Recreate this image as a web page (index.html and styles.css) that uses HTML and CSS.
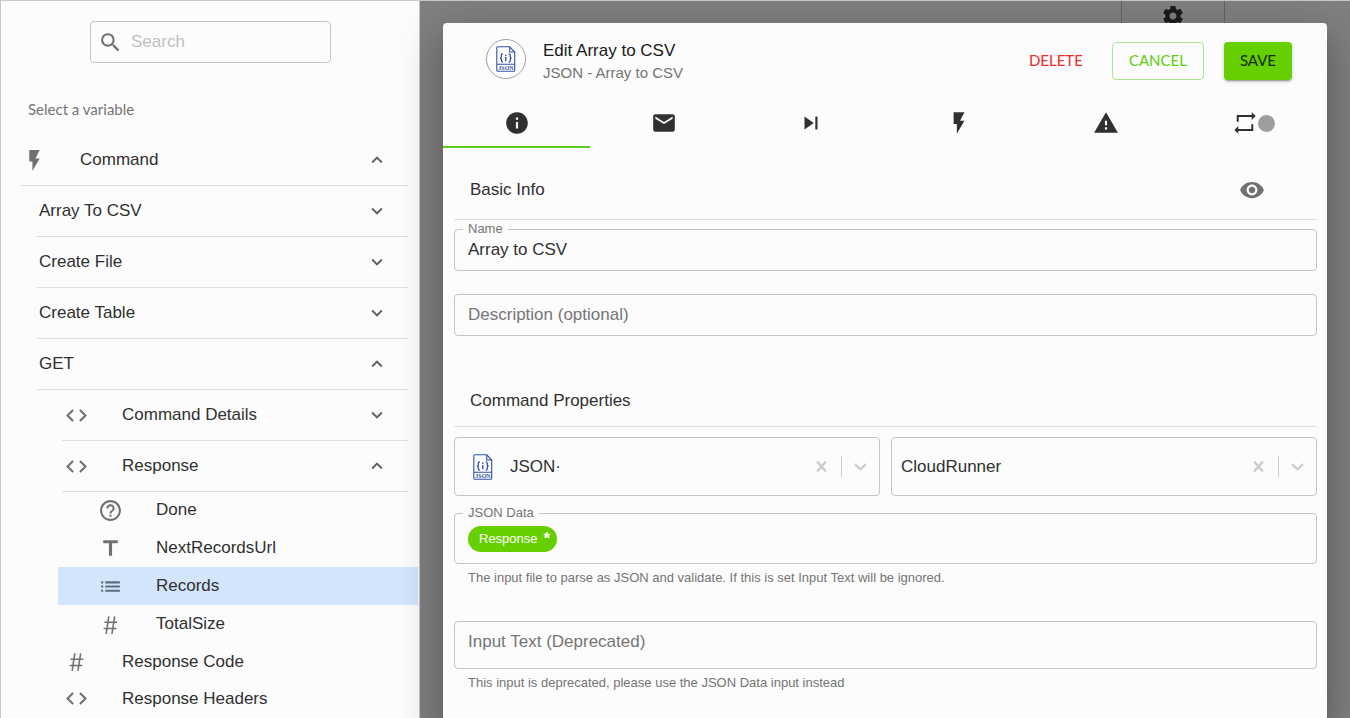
FILE: index.html
```html
<!DOCTYPE html>
<html lang="en">
<head>
    <meta charset="UTF-8">
    <meta name="viewport" content="width=device-width, initial-scale=1.0">
    <title>Edit Array to CSV</title>
    <link rel="stylesheet" href="styles.css">
</head>
<body>
    <!-- icon sprite -->
    <svg class="sprite" aria-hidden="true">
        <symbol id="i-search" viewBox="0 0 24 24"><path d="M15.5 14h-.79l-.28-.27A6.471 6.471 0 0 0 16 9.5 6.5 6.5 0 1 0 9.5 16c1.61 0 3.09-.59 4.23-1.57l.27.28v.79l5 4.99L20.49 19l-4.99-5zm-6 0C7.01 14 5 11.99 5 9.5S7.01 5 9.5 5 14 7.01 14 9.5 11.99 14 9.5 14z"/></symbol>
        <symbol id="i-bolt" viewBox="0 0 24 24"><path d="M7 2v11h3v9l7-12h-4l4-8z"/></symbol>
        <symbol id="i-down" viewBox="0 0 24 24"><path d="M7.41 8.59L12 13.17l4.59-4.58L18 10l-6 6-6-6z"/></symbol>
        <symbol id="i-up" viewBox="0 0 24 24"><path d="M7.41 15.41L12 10.83l4.59 4.58L18 14l-6-6-6 6z"/></symbol>
        <symbol id="i-code" viewBox="0 0 24 24"><path d="M9.4 16.6L4.8 12l4.6-4.6L8 6l-6 6 6 6 1.4-1.4zm5.2 0l4.6-4.6-4.6-4.6L16 6l6 6-6 6-1.4-1.4z"/></symbol>
        <symbol id="i-help" viewBox="0 0 24 24"><path d="M11 18h2v-2h-2v2zm1-16C6.48 2 2 6.48 2 12s4.48 10 10 10 10-4.48 10-10S17.52 2 12 2zm0 18c-4.41 0-8-3.59-8-8s3.59-8 8-8 8 3.59 8 8-3.59 8-8 8zm0-14c-2.21 0-4 1.79-4 4h2c0-1.1.9-2 2-2s2 .9 2 2c0 2-3 1.75-3 5h2c0-2.25 3-2.5 3-5 0-2.21-1.79-4-4-4z"/></symbol>
        <symbol id="i-title" viewBox="0 0 24 24"><path d="M5 4v3h5.5v12h3V7H19V4z"/></symbol>
        <symbol id="i-list" viewBox="0 0 24 24"><path d="M3 13h2v-2H3v2zm0 4h2v-2H3v2zm0-8h2V7H3v2zm4 4h14v-2H7v2zm0 4h14v-2H7v2zM7 7v2h14V7H7z"/></symbol>
        <symbol id="i-hash" viewBox="0 0 24 24"><path d="M10.4 4.2L7.8 21M16 4.2L13.4 21M6.2 9.8h12.2M5.4 15.8h12.2" fill="none" stroke="currentColor" stroke-width="1.5"/></symbol>
        <symbol id="i-info" viewBox="0 0 24 24"><path d="M12 2C6.48 2 2 6.48 2 12s4.48 10 10 10 10-4.48 10-10S17.52 2 12 2zm1 15h-2v-6h2v6zm0-8h-2V7h2v2z"/></symbol>
        <symbol id="i-mail" viewBox="0 0 24 24"><path d="M20 4H4c-1.1 0-1.99.9-1.99 2L2 18c0 1.1.9 2 2 2h16c1.1 0 2-.9 2-2V6c0-1.1-.9-2-2-2zm0 4l-8 5-8-5V6l8 5 8-5v2z"/></symbol>
        <symbol id="i-next" viewBox="0 0 24 24"><path d="M6 18l8.5-6L6 6v12zM16 6v12h2V6h-2z"/></symbol>
        <symbol id="i-warning" viewBox="0 0 24 24"><path d="M1 21h22L12 2 1 21zm12-3h-2v-2h2v2zm0-4h-2v-4h2v4z"/></symbol>
        <symbol id="i-repeat" viewBox="0 0 24 24"><path d="M4.4 10.8V4.7h13.8V2l3.6 3.6-3.6 3.6V6.5H6.2v4.3zM19.6 13.2v6.1H5.8V22l-3.6-3.6 3.6-3.6v2.7h12v-4.3z"/></symbol>
        <symbol id="i-eye" viewBox="0 0 24 24"><path d="M12 4.5C7 4.5 2.73 7.61 1 12c1.73 4.39 6 7.5 11 7.5s9.27-3.11 11-7.5c-1.73-4.39-6-7.5-11-7.5zM12 17c-2.76 0-5-2.24-5-5s2.24-5 5-5 5 2.24 5 5-2.24 5-5 5zm0-8c-1.66 0-3 1.34-3 3s1.34 3 3 3 3-1.34 3-3-1.34-3-3-3z"/></symbol>
        <symbol id="i-gear" viewBox="0 0 24 24"><path d="M19.43 12.98c.04-.32.07-.64.07-.98s-.03-.66-.07-.98l2.11-1.65c.19-.15.24-.42.12-.64l-2-3.46c-.12-.22-.39-.3-.61-.22l-2.49 1c-.52-.4-1.08-.73-1.69-.98l-.38-2.65C14.46 2.18 14.25 2 14 2h-4c-.25 0-.46.18-.49.42l-.38 2.65c-.61.25-1.17.59-1.69.98l-2.49-1c-.23-.09-.49 0-.61.22l-2 3.46c-.13.22-.07.49.12.64l2.11 1.65c-.04.32-.07.65-.07.98s.03.66.07.98l-2.11 1.65c-.19.15-.24.42-.12.64l2 3.46c.12.22.39.3.61.22l2.49-1c.52.4 1.08.73 1.69.98l.38 2.65c.03.24.24.42.49.42h4c.25 0 .46-.18.49-.42l.38-2.65c.61-.25 1.17-.59 1.69-.98l2.49 1c.23.09.49 0 .61-.22l2-3.46c.12-.22.07-.49-.12-.64l-2.11-1.65zM12 15.5c-1.93 0-3.5-1.57-3.5-3.5s1.57-3.5 3.5-3.5 3.5 1.57 3.5 3.5-1.57 3.5-3.5 3.5z"/></symbol>
        <symbol id="i-clear" viewBox="0 0 20 20"><path d="M14.348 14.849c-.469.469-1.229.469-1.697 0l-2.651-3.03-2.651 3.029c-.469.469-1.229.469-1.697 0-.469-.469-.469-1.229 0-1.697l2.758-3.15-2.759-3.152c-.469-.469-.469-1.228 0-1.697s1.228-.469 1.697 0l2.652 3.031 2.651-3.031c.469-.469 1.228-.469 1.697 0s.469 1.229 0 1.697l-2.758 3.152 2.758 3.15c.469.469.469 1.229 0 1.698z"/></symbol>
        <symbol id="i-chevron" viewBox="0 0 20 20"><path d="M4.516 7.548c.436-.446 1.043-.481 1.576 0l3.908 3.747 3.908-3.747c.533-.481 1.141-.446 1.574 0 .436.445.408 1.197 0 1.615-.406.418-4.695 4.502-4.695 4.502-.217.223-.502.335-.787.335s-.57-.112-.789-.335c0 0-4.287-4.084-4.695-4.502s-.436-1.17 0-1.615z"/></symbol>
        <symbol id="i-json" viewBox="0 0 20 26">
            <path d="M1.8.8h11.9l5 5.2v18.2a1 1 0 0 1-1 1H1.8a1 1 0 0 1-1-1V1.8a1 1 0 0 1 1-1zM13.7.8V6h5M.8 18.3h17.9" fill="none" stroke="currentColor" stroke-width="1.1"/>
            <path d="M7 7.8c-1.5 0-1.7.6-1.7 1.6v1.3c0 .9-.5 1.3-1.3 1.3.8 0 1.3.4 1.3 1.3v1.3c0 1 .2 1.6 1.7 1.6M12.6 7.8c1.5 0 1.7.6 1.7 1.6v1.3c0 .9.5 1.3 1.3 1.3-.8 0-1.3.4-1.3 1.3v1.3c0 1-.2 1.6-1.7 1.6" fill="none" stroke="currentColor" stroke-width="1.3"/>
            <path d="M9.1 8.6h1.4v1.3H9.1zM9.1 10.9h1.4v4.3H9.1z"/>
        </symbol>
    </svg>

    <div class="app">
        <!-- variable picker -->
        <aside class="sidebar">
            <label class="search">
                <svg class="icon"><use href="#i-search"/></svg>
                <input type="search" placeholder="Search" aria-label="Search">
            </label>
            <p class="hint">Select a variable</p>

            <ul class="tree">
                <li><button class="row head level-0"><svg class="icon"><use href="#i-bolt"/></svg><span>Command</span><svg class="arrow"><use href="#i-up"/></svg></button></li>
                <li><button class="row head level-1"><span>Array To CSV</span><svg class="arrow"><use href="#i-down"/></svg></button></li>
                <li><button class="row head level-1"><span>Create File</span><svg class="arrow"><use href="#i-down"/></svg></button></li>
                <li><button class="row head level-1"><span>Create Table</span><svg class="arrow"><use href="#i-down"/></svg></button></li>
                <li><button class="row head level-1"><span>GET</span><svg class="arrow"><use href="#i-up"/></svg></button></li>
                <li><button class="row head level-2"><svg class="icon"><use href="#i-code"/></svg><span>Command Details</span><svg class="arrow"><use href="#i-down"/></svg></button></li>
                <li>
                    <button class="row head level-2"><svg class="icon"><use href="#i-code"/></svg><span>Response</span><svg class="arrow"><use href="#i-up"/></svg></button>
                    <ul class="tree leaves">
                        <li><button class="row"><svg class="icon"><use href="#i-help"/></svg><span>Done</span></button></li>
                        <li><button class="row"><svg class="icon"><use href="#i-title"/></svg><span>NextRecordsUrl</span></button></li>
                        <li><button class="row selected"><svg class="icon"><use href="#i-list"/></svg><span>Records</span></button></li>
                        <li><button class="row"><svg class="icon"><use href="#i-hash"/></svg><span>TotalSize</span></button></li>
                    </ul>
                </li>
                <li><button class="row level-2"><svg class="icon"><use href="#i-hash"/></svg><span>Response Code</span></button></li>
                <li><button class="row level-2"><svg class="icon"><use href="#i-code"/></svg><span>Response Headers</span></button></li>
            </ul>
        </aside>

        <!-- dimmed page with the edit dialog -->
        <main class="backdrop">
            <div class="toolbar">
                <button class="toolbar-btn" aria-label="Settings"><svg class="icon"><use href="#i-gear"/></svg></button>
            </div>

            <div class="dialog" role="dialog" aria-label="Edit Array to CSV">
                <header class="dialog-header">
                    <div class="avatar">
                        <svg class="json-icon" viewBox="0 0 20 26"><use href="#i-json"/><text x="10" y="24" text-anchor="middle">JSON</text></svg>
                    </div>
                    <div class="titles">
                        <h1>Edit Array to CSV</h1>
                        <p>JSON - Array to CSV</p>
                    </div>
                    <div class="actions">
                        <button class="btn btn-delete">DELETE</button>
                        <button class="btn btn-cancel">CANCEL</button>
                        <button class="btn btn-save">SAVE</button>
                    </div>
                </header>

                <nav class="tabs">
                    <button class="tab active" aria-label="Info"><svg class="icon"><use href="#i-info"/></svg></button>
                    <button class="tab" aria-label="Messages"><svg class="icon"><use href="#i-mail"/></svg></button>
                    <button class="tab" aria-label="Next step"><svg class="icon"><use href="#i-next"/></svg></button>
                    <button class="tab" aria-label="Actions"><svg class="icon"><use href="#i-bolt"/></svg></button>
                    <button class="tab" aria-label="Errors"><svg class="icon"><use href="#i-warning"/></svg></button>
                    <button class="tab" aria-label="Repeat"><svg class="icon"><use href="#i-repeat"/></svg><span class="dot"></span></button>
                </nav>

                <form class="panel">
                    <section>
                        <div class="section-head tall">
                            <h2>Basic Info</h2>
                            <button type="button" class="eye" aria-label="Preview"><svg class="icon"><use href="#i-eye"/></svg></button>
                        </div>
                        <div class="field">
                            <label for="name">Name</label>
                            <input id="name" type="text" value="Array to CSV">
                        </div>
                        <div class="field">
                            <input type="text" placeholder="Description (optional)" aria-label="Description (optional)">
                        </div>
                    </section>

                    <section>
                        <div class="section-head">
                            <h2>Command Properties</h2>
                        </div>
                        <div class="selects">
                            <div class="select-box with-icon">
                                <svg class="json-icon" viewBox="0 0 20 26"><use href="#i-json"/><text x="10" y="24" text-anchor="middle">JSON</text></svg>
                                <select aria-label="Connector"><option>JSON·</option></select>
                                <button type="button" class="clear" aria-label="Clear connector"><svg><use href="#i-clear"/></svg></button>
                                <svg class="chevron"><use href="#i-chevron"/></svg>
                            </div>
                            <div class="select-box">
                                <select aria-label="Runner"><option>CloudRunner</option></select>
                                <button type="button" class="clear" aria-label="Clear runner"><svg><use href="#i-clear"/></svg></button>
                                <svg class="chevron"><use href="#i-chevron"/></svg>
                            </div>
                        </div>
                        <div class="field chips">
                            <label for="json-data">JSON Data</label>
                            <button type="button" class="chip">Response<b>*</b></button>
                            <input id="json-data" type="text">
                        </div>
                        <p class="helper">The input file to parse as JSON and validate. If this is set Input Text will be ignored.</p>
                        <div class="field large">
                            <input type="text" placeholder="Input Text (Deprecated)" aria-label="Input Text (Deprecated)">
                        </div>
                        <p class="helper">This input is deprecated, please use the JSON Data input instead</p>
                    </section>
                </form>
            </div>
        </main>
    </div>
</body>
</html>
```
FILE: styles.css
```css
* {
    margin: 0;
    padding: 0;
    box-sizing: border-box;
}

body {
    height: 100vh;
    overflow: hidden;
    font-family: 'Liberation Sans', Arial, sans-serif;
    font-size: 17px;
    color: #303030;
}

button,
input,
select {
    font: inherit;
    color: inherit;
    background: none;
    border: none;
    outline: none;
}

button {
    cursor: pointer;
}

svg {
    display: block;
    flex: none;
    fill: currentColor;
}

.sprite {
    position: absolute;
    width: 0;
    height: 0;
}

.icon {
    width: 26px;
    height: 26px;
}

.app {
    display: flex;
    height: 100vh;
    border-top: 1px solid #c8caca;
}

/* sidebar */
.sidebar {
    flex: none;
    width: 420px;
    overflow: hidden;
    background: #fcfcfc;
    border-left: 1px solid #c4c4c4;
    border-right: 1px solid #c4c4c4;
}

.search {
    display: flex;
    align-items: center;
    gap: 8px;
    width: 241px;
    height: 42px;
    margin: 20px 0 0 89px;
    padding: 0 7px;
    border: 1px solid #c4c4c4;
    border-radius: 4px;
    color: #707070;
}

.search .icon,
.row .icon {
    width: 25px;
    height: 25px;
}

.search input {
    min-width: 0;
    flex: 1;
}

.search input::placeholder {
    color: #c0c0c0;
}

.hint {
    margin: 36px 0 16px 27px;
    font-family: Lato, sans-serif;
    font-size: 15px;
    line-height: 20px;
    color: #757575;
}

.tree {
    list-style: none;
}

.tree li {
    display: flex;
    flex-direction: column;
}

.row {
    display: flex;
    align-items: center;
    height: 37px;
    text-align: left;
}

.row span {
    flex: 1;
}

.row .icon {
    margin-right: 33px;
    color: #707070;
}

.head {
    height: 51px;
    margin-right: 11px;
    padding-right: 20px;
    border-bottom: 1px solid #e0e0e0;
}

.level-0 {
    margin-left: 19px;
    padding-left: 2px;
}

.level-1 {
    margin-left: 36px;
    padding-left: 2px;
}

.level-2 {
    margin-left: 61px;
    padding-left: 2px;
}

.arrow {
    width: 22px;
    height: 22px;
    color: #606060;
}

.leaves {
    margin: -1px 1px 0 57px;
}

.leaves .row {
    height: 38px;
    padding-left: 40px;
}

.leaves .selected {
    background: #d3e5fb;
}

.leaves .selected .icon {
    color: #5f6b7c;
}

/* dialog over the dimmed page */
.backdrop {
    flex: 1;
    min-width: 0;
    display: flex;
    flex-direction: column;
    background: #808080;
}

.toolbar {
    flex: none;
    display: flex;
    justify-content: flex-end;
    height: 22px;
    margin-right: 125px;
    overflow: hidden;
}

.toolbar-btn {
    display: flex;
    justify-content: center;
    width: 104px;
    height: 50px;
    padding-top: 3px;
    border: solid #636363;
    border-width: 0 1px;
    color: #1c1c1c;
}

.toolbar-btn .icon {
    width: 24px;
    height: 24px;
}

.dialog {
    flex: 1;
    margin: 0 23px;
    background: #fcfcfc;
    border-radius: 4px 4px 0 0;
    box-shadow: 0 11px 15px -7px rgba(0,0,0,0.2), 0 24px 38px 3px rgba(0,0,0,0.14), 0 9px 46px 8px rgba(0,0,0,0.12);
}

.dialog-header {
    display: flex;
    align-items: flex-start;
    height: 75px;
    padding: 16px 35px 0 43px;
}

.avatar {
    display: flex;
    align-items: center;
    justify-content: center;
    width: 40px;
    height: 40px;
    border: 1px solid #a0a0a0;
    border-radius: 50%;
    background: #fff;
}

.json-icon {
    width: 20px;
    height: 26px;
    color: #3450a4;
}

.json-icon text {
    font-family: 'Liberation Serif', serif;
    font-size: 6px;
    font-weight: bold;
}

.titles {
    flex: 1;
    margin-left: 17px;
}

.titles h1 {
    font-size: 17px;
    font-weight: normal;
    line-height: 24px;
    color: #181818;
}

.titles p {
    font-size: 15px;
    line-height: 20px;
    color: #757575;
}

.actions {
    display: flex;
    margin-top: 3px;
}

.btn {
    height: 38px;
    padding: 0 16px 2px;
    border-radius: 4px;
    font-family: Lato, sans-serif;
    font-size: 15px;
}

.btn-delete {
    margin-right: 13px;
    color: #f02828;
}

.btn-cancel {
    margin-right: 20px;
    border: 1px solid #aee58a;
    color: #5fcc0c;
}

.btn-save {
    background: #66cf00;
    color: #142900;
    box-shadow: 0 3px 1px -2px rgba(0,0,0,0.2), 0 2px 2px 0 rgba(0,0,0,0.14), 0 1px 5px 0 rgba(0,0,0,0.12);
}

.tabs {
    display: flex;
}

.tab {
    flex: 1;
    display: flex;
    align-items: center;
    justify-content: center;
    height: 50px;
    padding-top: 2px;
    border-bottom: 2px solid transparent;
}

.tab.active {
    border-bottom-color: #5fcc1c;
}

.dot {
    width: 17px;
    height: 17px;
    border-radius: 50%;
    background: #9e9e9e;
}

/* form */
.panel {
    padding: 0 10px 0 11px;
}

.section-head {
    display: flex;
    align-items: center;
    justify-content: space-between;
    height: 52px;
    margin: 39px 0 10px;
    padding: 0 52px 0 16px;
    border-bottom: 1px solid #e0e0e0;
}

.section-head.tall {
    height: 60px;
    margin: 12px 0 9px;
}

.section-head h2 {
    font-size: 17px;
    font-weight: normal;
}

.eye {
    color: #707070;
}

.field {
    position: relative;
    display: flex;
    align-items: center;
    height: 42px;
    margin-bottom: 23px;
    padding: 0 13px;
    border: 1px solid #c4c4c4;
    border-radius: 4px;
}

.field label {
    position: absolute;
    top: -9px;
    left: 8px;
    padding: 0 5px;
    background: #fcfcfc;
    font-size: 13px;
    line-height: 16px;
    color: #757575;
}

.field input {
    flex: 1;
    min-width: 0;
}

.field input::placeholder {
    color: #757575;
}

.field.chips {
    height: 51px;
    margin-bottom: 6px;
}

.field.large {
    height: 48px;
    margin: 35px 0 6px;
    padding-bottom: 6px;
}

.chip {
    display: flex;
    align-items: center;
    gap: 6px;
    height: 26px;
    padding: 0 7px 0 11px;
    border-radius: 13px;
    background: #66cf00;
    font-size: 13px;
    color: #fff;
}

.chip b {
    font-size: 17px;
    line-height: 16px;
}

.helper {
    padding-left: 14px;
    font-size: 13px;
    line-height: 16px;
    color: #757575;
}

.selects {
    display: grid;
    grid-template-columns: 1fr 1fr;
    gap: 11px;
    margin-bottom: 17px;
}

.select-box {
    display: flex;
    align-items: center;
    height: 59px;
    padding: 0 8px 0 9px;
    border: 1px solid #c4c4c4;
    border-radius: 4px;
}

.select-box.with-icon {
    padding-left: 18px;
}

.with-icon .json-icon {
    margin-right: 17px;
}

.select-box select {
    flex: 1;
    min-width: 0;
    appearance: none;
}

.clear {
    padding-right: 9px;
    border-right: 1px solid #ccc;
    color: #ccc;
}

.clear svg,
.chevron {
    width: 21px;
    height: 21px;
    color: #ccc;
}

.chevron {
    margin-left: 8px;
}
```
